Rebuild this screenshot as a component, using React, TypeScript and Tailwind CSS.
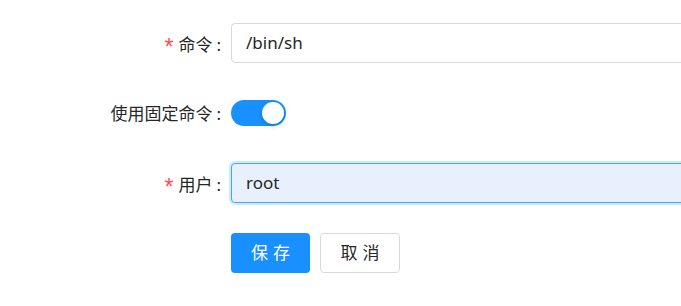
import { useState } from 'react'

const font = { fontFamily: '"Noto Sans", "Noto Sans CJK SC", sans-serif' }

function Label({ text, required }: { text: string; required?: boolean }) {
  return (
    <div className="w-[231px] shrink-0 pr-[10px] text-right text-[17px] text-[#262626] leading-none">
      {required && <span className="mr-[5px] text-[#ff4d4f] font-['Liberation_Sans',sans-serif] text-[23px] font-light relative top-[4px]">*</span>}
      <span>{text}</span>
      <span className="ml-[4px]">:</span>
    </div>
  )
}

export default function App() {
  const [fixed, setFixed] = useState(true)

  return (
    <div className="w-[681px] h-[306px] overflow-hidden bg-white pt-[23px]" style={font}>
      <div className="flex flex-col gap-[30px]">
        {/* 命令 */}
        <div className="flex items-center h-10">
          <Label text="命令" required />
          <div className="w-[520px] h-10 shrink-0 rounded-[4px] border border-[#d9d9d9] flex items-center pl-[14px] text-[17px] text-[#262626]">
            /bin/sh
          </div>
        </div>

        {/* 使用固定命令 */}
        <div className="flex items-center h-10">
          <Label text="使用固定命令" />
          <button
            onClick={() => setFixed(!fixed)}
            className={`w-[55px] h-[26px] rounded-full flex items-center px-[2px] ${fixed ? 'bg-[#1890ff] justify-end' : 'bg-[#bfbfbf] justify-start'}`}
          >
            <span className="w-[22px] h-[22px] rounded-full bg-white shadow-[0_2px_4px_rgba(0,35,11,0.2)]" />
          </button>
        </div>

        {/* 用户 */}
        <div className="flex items-center h-10">
          <Label text="用户" required />
          <div className="w-[520px] h-10 shrink-0 rounded-[4px] border border-[#40a9ff] bg-[#e8f0fe] shadow-[0_0_0_2px_rgba(24,144,255,0.2)] flex items-center pl-[14px] text-[17px] text-[#262626]">
            root
          </div>
        </div>

        {/* buttons */}
        <div className="flex items-center h-10 pl-[231px] gap-[10px]">
          <button className="w-[79px] h-10 rounded-[4px] bg-[#1890ff] text-white text-[17px] tracking-[5px] pl-[5px]">
            保存
          </button>
          <button className="w-[80px] h-10 rounded-[4px] border border-[#d9d9d9] bg-white text-[#262626] text-[17px] tracking-[5px] pl-[5px]">
            取消
          </button>
        </div>
      </div>
    </div>
  )
}
